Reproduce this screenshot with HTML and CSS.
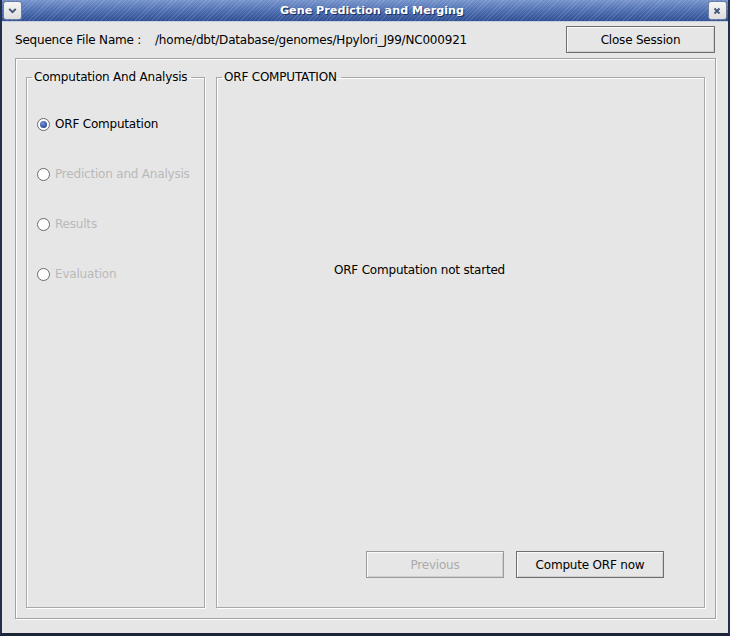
FILE: index.html
```html
<!DOCTYPE html>
<html>
<head>
<meta charset="utf-8">
<link rel="stylesheet" href="styles.css">
</head>
<body>
<div class="window">
  <div class="titlebar">
    <span class="tb-btn">
      <svg width="11" height="11" viewBox="0 0 10 10"><path d="M2 3.5 L5 6.5 L8 3.5" fill="none" stroke="#44557a" stroke-width="1.8"/></svg>
    </span>
    <span class="title">Gene Prediction and Merging</span>
    <span class="tb-btn">
      <svg width="10" height="10" viewBox="0 0 10 10"><path d="M2.5 2.5 L7.5 7.5 M7.5 2.5 L2.5 7.5" fill="none" stroke="#44557a" stroke-width="1.8"/></svg>
    </span>
  </div>
  <div class="content">
    <div class="seq-row">
      <span class="seq-label">Sequence File Name :</span>
      <span class="seq-path">/home/dbt/Database/genomes/Hpylori_J99/NC000921</span>
      <button class="btn close-btn">Close Session</button>
    </div>
    <div class="panel">
      <fieldset class="group side">
        <legend>Computation And Analysis</legend>
        <ul class="radios">
          <li class="radio checked"><span class="dot"></span>ORF Computation</li>
          <li class="radio disabled"><span class="dot"></span>Prediction and Analysis</li>
          <li class="radio disabled"><span class="dot"></span>Results</li>
          <li class="radio disabled"><span class="dot"></span>Evaluation</li>
        </ul>
      </fieldset>
      <fieldset class="group main">
        <legend>ORF COMPUTATION</legend>
        <div class="message">ORF Computation not started</div>
        <div class="actions">
          <button class="btn prev" disabled>Previous</button>
          <button class="btn compute">Compute ORF now</button>
        </div>
      </fieldset>
    </div>
  </div>
</div>
</body>
</html>
```
FILE: styles.css
```css
html, body {
  margin: 0;
  padding: 0;
  background: #e6e6e6;
}
body {
  font-family: "DejaVu Sans", "Bitstream Vera Sans", sans-serif;
  font-size: 12px;
  letter-spacing: -0.2px;
  color: #000;
}
.window {
  width: 730px;
  height: 636px;
  box-sizing: border-box;
  display: flex;
  flex-direction: column;
  background: #e6e6e6;
  border-left: 2px solid #22304c;
  border-right: 2px solid #22304c;
  border-bottom: 3px solid #1c2438;
}
.titlebar {
  height: 22px;
  display: flex;
  align-items: center;
  justify-content: space-between;
  padding: 0 1px 0 1px;
  background:
    repeating-linear-gradient(135deg, rgba(255,255,255,0.12) 0 1px, rgba(0,0,0,0) 1px 3px),
    linear-gradient(#7694cd, #4d6eb0 50%, #2e4f93);
  border-bottom: 1px solid #c8cfdc;
  box-sizing: border-box;
}
.title {
  color: #fff;
  font-weight: bold;
  font-size: 11.2px;
  letter-spacing: 0;
  padding-left: 14px;
  text-shadow: 1px 1px 0 #1d2f5a;
}
.tb-btn {
  width: 17px;
  height: 17px;
  display: flex;
  align-items: center;
  justify-content: center;
  background: linear-gradient(#f6f6f6, #dedede);
  border: 1px solid #6a7ca0;
  border-radius: 3px;
}
.content {
  flex: 1;
  display: flex;
  flex-direction: column;
  padding: 4px 12px 14px 13px;
}
.seq-row {
  display: flex;
  align-items: center;
  height: 27px;
}
.seq-label {
  width: 140px;
}
.seq-path {
  flex: 1;
}
.btn {
  font-family: inherit;
  font-size: 12px;
  letter-spacing: -0.2px;
  background: #e6e6e6;
  border: 1px solid #6e6e6e;
  box-shadow: inset 1px 1px 0 #fafafa, inset -1px -1px 0 #cfcfcf;
  color: #000;
  height: 27px;
  padding: 0;
  margin: 0;
}
.close-btn {
  width: 149px;
  margin-right: 1px;
}
.panel {
  flex: 1;
  margin-top: 5px;
  display: flex;
  gap: 11px;
  padding: 10px 10px 10px 10px;
  border: 1px solid #a2a2a2;
  box-shadow: inset 1px 1px 0 #fff, 1px 1px 0 #fff;
}
.group {
  margin: 0;
  padding: 0;
  border: 1px solid #a8a8a8;
  box-shadow: inset 1px 1px 0 #fff, 1px 1px 0 #fff;
  min-width: 0;
}
.group legend {
  margin-left: 5px;
  padding: 0 4px 0 2px;
  line-height: 16px;
}
.side {
  width: 179px;
  box-sizing: border-box;
  flex: none;
}
.main {
  flex: 1;
  display: flex;
  flex-direction: column;
}
.radios {
  list-style: none;
  margin: 0;
  padding: 31px 0 0 10px;
  display: flex;
  flex-direction: column;
  gap: 34px;
}
.radio {
  display: flex;
  align-items: center;
  height: 16px;
  line-height: 16px;
  white-space: nowrap;
}
.dot {
  width: 11px;
  height: 11px;
  border-radius: 50%;
  border: 1px solid #6a6a6a;
  background: #fff;
  margin-right: 5px;
  display: flex;
  align-items: center;
  justify-content: center;
  flex: none;
}
.checked .dot::after {
  content: "";
  width: 7px;
  height: 7px;
  border-radius: 50%;
  background: radial-gradient(circle at 40% 35%, #7b96d6, #2f4f9a 70%);
}
.disabled {
  color: #b9b9b9;
}
.message {
  margin-top: 177px;
  padding-right: 82px;
  text-align: center;
  line-height: 16px;
}
.actions {
  margin-top: auto;
  margin-bottom: 29px;
  display: flex;
  justify-content: flex-end;
  gap: 12px;
  padding-right: 40px;
}
.prev {
  width: 138px;
  color: #ababab;
  border-color: #9a9a9a;
}
.compute {
  width: 148px;
}
```
